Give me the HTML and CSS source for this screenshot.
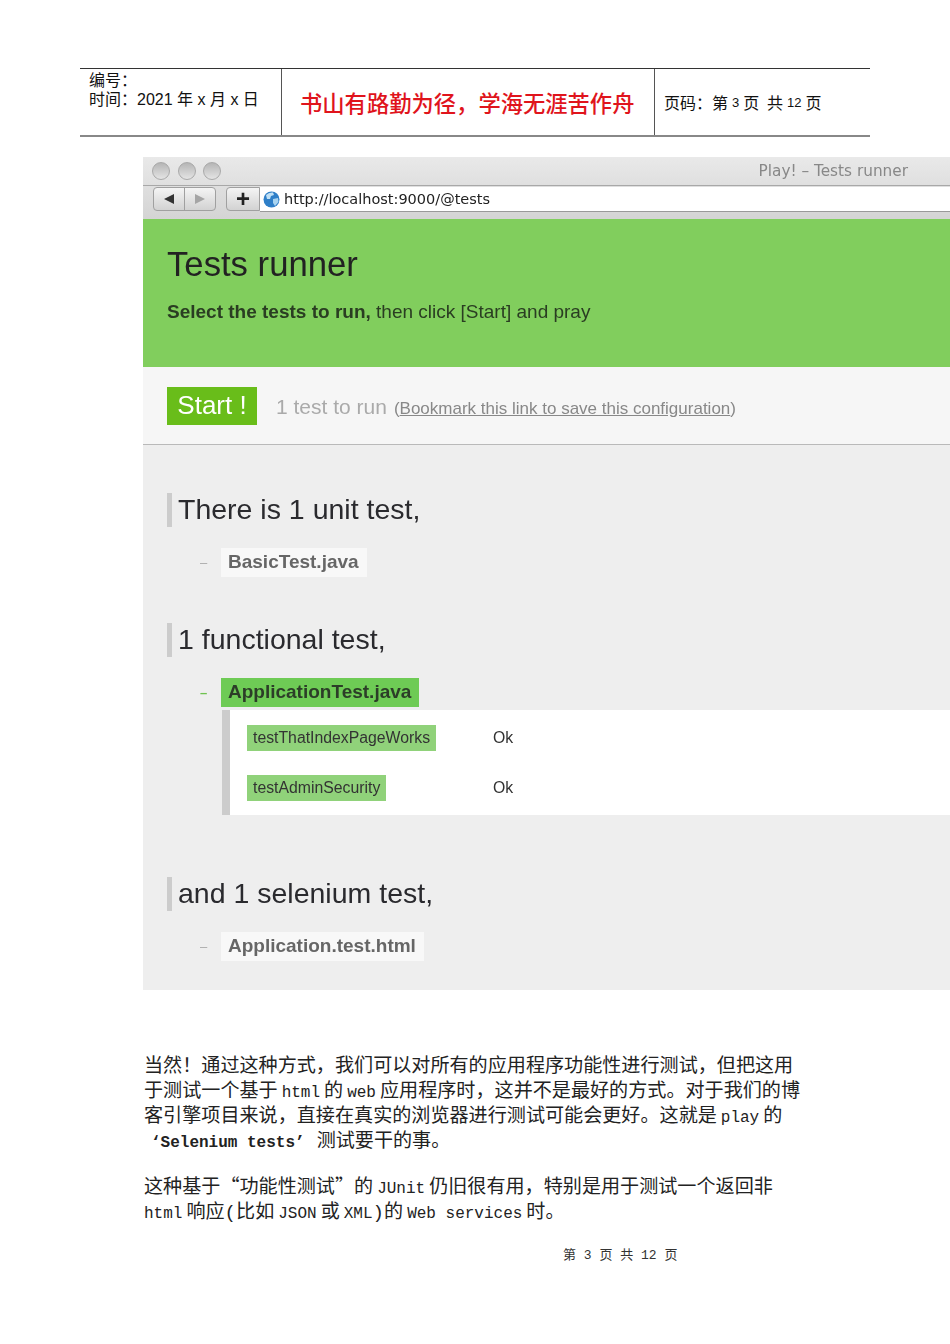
FILE: index.html
```html
<!DOCTYPE html>
<html lang="zh-CN">
<head>
    <meta charset="UTF-8">
    <title>第 3 页</title>
    <link rel="stylesheet" href="styles.css">
</head>
<body>
    <div class="page">
        <!-- Doc header -->
        <div class="doc-header">
            <div class="cell cell-left">
                <div>编号：</div>
                <div>时间：2021 年 x 月 x 日</div>
            </div>
            <div class="cell cell-mid">书山有路勤为径，学海无涯苦作舟</div>
            <div class="cell cell-right">页码：第 <span class="small-num">3</span> 页&nbsp; 共 <span class="small-num">12</span> 页</div>
        </div>

        <!-- Browser screenshot -->
        <div class="shot">
            <div class="chrome">
                <div class="title-row">
                    <div class="lights">
                        <span class="light"></span>
                        <span class="light"></span>
                        <span class="light"></span>
                    </div>
                    <div class="win-title">Play! – Tests runner</div>
                </div>
                <div class="tool-row">
                    <div class="nav-btns">
                        <span class="nav-btn"><span class="arrow-left"></span></span>
                        <span class="nav-btn"><span class="arrow-right"></span></span>
                    </div>
                    <div class="plus-btn">+</div>
                    <div class="address">
                        <svg class="globe" width="17" height="17" viewBox="0 0 17 17">
                            <circle cx="8.5" cy="8.5" r="8" fill="#2f7fc8"/>
                            <path d="M3 4 Q6 1 10 1.500 L11 4 L8 5 L7 8 L4 8 Z" fill="#bfe0f5"/>
                            <path d="M10 8 L15 7 L15.500 11 L12 15 L10 12 Z" fill="#a9d4f0"/>
                        </svg>
                        <span class="url">http://localhost:9000/@tests</span>
                    </div>
                </div>
            </div>

            <div class="green-head">
                <h1>Tests runner</h1>
                <p><b>Select the tests to run,</b> then click [Start] and pray</p>
            </div>

            <div class="start-bar">
                <span class="start-btn">Start !</span>
                <span class="to-run">1 test to run</span>
                <span class="bookmark">(<u>Bookmark this link to save this configuration</u>)</span>
            </div>

            <div class="tests">
                <h2>There is 1 unit test,</h2>
                <div class="file-row">
                    <span class="dash">–</span>
                    <span class="file">BasicTest.java</span>
                </div>

                <h2 class="next">1 functional test,</h2>
                <div class="file-row">
                    <span class="dash dash-green">–</span>
                    <span class="file file-green">ApplicationTest.java</span>
                </div>
                <div class="results">
                    <div class="result">
                        <span class="method">testThatIndexPageWorks</span>
                        <span class="status">Ok</span>
                    </div>
                    <div class="result">
                        <span class="method">testAdminSecurity</span>
                        <span class="status">Ok</span>
                    </div>
                </div>

                <h2 class="next-far">and 1 selenium test,</h2>
                <div class="file-row">
                    <span class="dash">–</span>
                    <span class="file">Application.test.html</span>
                </div>
            </div>
        </div>

        <!-- Body text -->
        <div class="text">
            <p>当然！通过这种方式，我们可以对所有的应用程序功能性进行测试，但把这用</p>
            <p>于测试一个基于<span class="lat">html</span>的<span class="lat">web</span>应用程序时，这并不是最好的方式。对于我们的博</p>
            <p>客引擎项目来说，直接在真实的浏览器进行测试可能会更好。这就是<span class="lat">play</span>的</p>
            <p><b class="lat lat-first">‘Selenium tests’</b>测试要干的事。</p>
            <p class="gap">这种基于<span class="cjk">“</span>功能性测试<span class="cjk">”</span>的<span class="lat">JUnit</span>仍旧很有用，特别是用于测试一个返回非</p>
            <p><span class="lat lat-start">html</span>响应(比如<span class="lat">JSON</span>或<span class="lat lat-end">XML</span>)的<span class="lat">Web services</span>时。</p>
        </div>

        <div class="page-foot">第 3 页 共 12 页</div>
    </div>
</body>
</html>
```

FILE: styles.css
```css
* {
    box-sizing: border-box;
}

body {
    margin: 0;
    background-color: #fff;
    color: #111;
    font-family: "Liberation Sans", "Noto Sans CJK SC", sans-serif;
}

.page {
    width: 950px;
    height: 1344px;
    overflow: hidden;
    padding-top: 68px;
}

/* doc header */
.doc-header {
    display: grid;
    grid-template-columns: 201px 374px 215px;
    height: 69px;
    margin: 0 80px;
    border-top: 1px solid #333;
    border-bottom: 2px solid #888;
}

.cell {
    font-size: 16px;
    padding-left: 9px;
}

.cell-left {
    padding-top: 2px;
    line-height: 19px;
}

.cell-mid {
    display: flex;
    align-items: center;
    padding-left: 18px;
    border-left: 1px solid #555;
    border-right: 1px solid #555;
    color: #e0141c;
    font-size: 22.3px;
    font-weight: 500;
    white-space: nowrap;
}

.cell-right {
    display: flex;
    align-items: center;
    white-space: pre;
    word-spacing: -0.5px;
}

.small-num {
    font-size: 13px;
}

/* screenshot */
.shot {
    width: 807px;
    margin: 20px 0 0 143px;
    filter: blur(0.4px);
}

.chrome {
    height: 62px;
    background: linear-gradient(#e9e9e9, #d4d4d4);
}

.title-row {
    display: flex;
    align-items: center;
    justify-content: space-between;
    height: 29px;
    padding: 0 42px 0 9px;
    border-bottom: 1px solid #a8a8a8;
}

.lights {
    display: flex;
    gap: 7.5px;
}

.light {
    width: 18px;
    height: 18px;
    border: 1px solid #a9a9a9;
    border-radius: 50%;
    background: linear-gradient(#b5b5b5, #e4e4e4);
}

.win-title {
    font-family: "DejaVu Sans", sans-serif;
    font-size: 15.3px;
    color: #888;
}

.tool-row {
    display: flex;
    align-items: flex-start;
    height: 33px;
    padding: 1px 0 0 10px;
}

.nav-btns {
    display: flex;
    width: 63px;
    height: 24px;
    border: 1px solid #a0a0a0;
    border-radius: 4px;
    background: linear-gradient(#f4f4f4, #d2d2d2);
}

.nav-btn {
    display: flex;
    flex: 1;
    align-items: center;
    justify-content: center;
}

.nav-btn + .nav-btn {
    border-left: 1px solid #a0a0a0;
}

.arrow-left {
    border-top: 5px solid transparent;
    border-bottom: 5px solid transparent;
    border-right: 10px solid #333;
}

.arrow-right {
    border-top: 5px solid transparent;
    border-bottom: 5px solid transparent;
    border-left: 10px solid #a5a5a5;
}

.plus-btn {
    width: 34px;
    height: 24px;
    margin-left: 10px;
    border: 1px solid #a0a0a0;
    border-radius: 4px 0 0 4px;
    background: linear-gradient(#f4f4f4, #d2d2d2);
    color: #222;
    font-size: 24px;
    font-weight: bold;
    line-height: 21px;
    text-align: center;
}

.address {
    display: flex;
    flex: 1;
    align-items: center;
    gap: 4px;
    height: 25px;
    padding-left: 3px;
    background-color: #fff;
    border-bottom: 1px solid #999;
}

.url {
    font-family: "DejaVu Sans", sans-serif;
    font-size: 14.5px;
    color: #222;
}

.green-head {
    height: 148px;
    padding: 25px 24px 0;
    background-color: #81ce5d;
    color: #222;
}

.green-head h1 {
    margin: 0;
    font-size: 34.7px;
    font-weight: normal;
    line-height: 40px;
}

.green-head p {
    margin: 16px 0 0;
    font-size: 19px;
    line-height: 24px;
    color: #2a3d22;
}

.start-bar {
    display: flex;
    align-items: baseline;
    height: 78px;
    padding: 20px 24px 0;
    background-color: #f6f6f6;
    border-bottom: 1px solid #b9b9b9;
}

.start-btn {
    width: 90px;
    height: 38px;
    background-color: #69bd1a;
    color: #fff;
    font-size: 26px;
    line-height: 37px;
    text-align: center;
}

.to-run {
    margin-left: 19px;
    color: #aaa;
    font-size: 21px;
}

.bookmark {
    margin-left: 7px;
    color: #888;
    font-size: 17px;
}

.tests {
    height: 545px;
    padding: 48px 0 0 24px;
    background-color: #eee;
}

.tests h2 {
    height: 34px;
    margin: 0;
    padding-left: 6px;
    border-left: 5px solid #ccc;
    color: #2a2a2e;
    font-size: 28.5px;
    font-weight: normal;
    line-height: 32px;
}

.tests h2.next {
    margin-top: 46px;
}

.tests h2.next-far {
    margin-top: 62px;
}

.file-row {
    display: flex;
    align-items: center;
    height: 29px;
    margin-top: 21px;
    padding-left: 33px;
}

.dash {
    width: 21px;
    color: #aaa;
    font-size: 13px;
}

.dash-green {
    color: #6fc24f;
    font-weight: bold;
}

.file {
    height: 29px;
    padding: 0 8px 0 7px;
    background-color: #f8f8f8;
    color: #666;
    font-size: 19px;
    font-weight: bold;
    line-height: 28px;
}

.file-green {
    background-color: #6ecb55;
    color: #2c3d28;
}

.results {
    height: 105px;
    margin: 3px 0 0 55px;
    padding-top: 15px;
    background-color: #fff;
    border-left: 8px solid #ccc;
}

.result {
    display: grid;
    grid-template-columns: 246px auto;
    align-items: center;
    justify-items: start;
    height: 26px;
    margin-bottom: 24px;
    padding-left: 17px;
    font-size: 15.8px;
    color: #333;
}

.method {
    height: 26px;
    padding: 0 6px;
    background-color: #90d27a;
    line-height: 25px;
}

/* body text */
.text {
    margin: 65px 0 0 144px;
    font-family: "Liberation Mono", "Noto Sans CJK SC", monospace;
    font-size: 19.1px;
    color: #222;
    white-space: nowrap;
}

.text p {
    height: 25px;
    margin: 0;
    line-height: 25px;
}

.text p.gap {
    margin-top: 21px;
}

.lat {
    margin: 0 4px;
    font-size: 16px;
    white-space: pre;
}

.lat-start {
    margin-left: 0;
}

.lat-end {
    margin-right: 0;
}

.lat-first {
    margin: 0 12px 0 7px;
}

.cjk {
    font-family: "Noto Sans CJK SC", sans-serif;
    line-height: 1;
}

.page-foot {
    margin: 20px 0 0 563px;
    font-family: "Liberation Mono", "Noto Sans CJK SC", monospace;
    font-size: 13px;
    line-height: 20px;
    color: #333;
}
```
